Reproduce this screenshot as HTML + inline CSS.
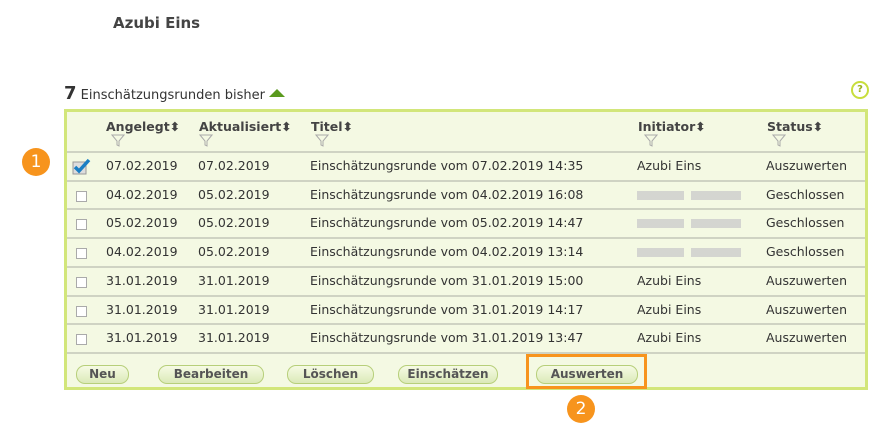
<!DOCTYPE html>
<html><head><meta charset="utf-8"><style>
body{margin:0;width:895px;height:431px;background:#fff;font-family:"DejaVu Sans","Liberation Sans",sans-serif;color:#333;position:relative;overflow:hidden}
.a{position:absolute}
h1{position:absolute;left:113px;top:14px;margin:0;font-size:15px;font-weight:bold;color:#444}
.tbl{position:absolute;left:64px;top:109px;width:798px;height:275px;border:3px solid #d2e67a;background:#f4f9e3}
.row{position:absolute;left:0;width:798px;border-top:2px solid #cfd3c3;font-size:12.5px;color:#333}
.row span{position:absolute;top:5px;white-space:nowrap}
.hd span{position:absolute;top:7px;font-weight:bold;font-size:12.5px;color:#444}
.cb{position:absolute;left:9px;top:9px;width:9px;height:9px;border:1px solid #aaa;background:#fff}
.blur{position:absolute;top:9px;height:9px;width:104px;background:linear-gradient(90deg,#ccc 0 45%,transparent 45% 52%,#ccc 52%);opacity:.8}
.btn{position:absolute;top:253px;height:17px;border:1px solid #b7cf7a;border-radius:9px;background:linear-gradient(#f6fbe4,#dbe9b8);font-size:12px;font-weight:bold;color:#555;text-align:center;line-height:17px}
.num{position:absolute;width:28px;height:28px;border-radius:50%;background:#f7941d;color:#fff;font-size:17px;text-align:center;line-height:28px}
.srt{color:#d4d4d4;font-size:9px;font-weight:normal}
</style></head><body>
<h1>Azubi Eins</h1>
<div class="a" style="left:64px;top:83px;font-size:13px;color:#333"><b style="font-size:18px">7</b> Einschätzungsrunden bisher <svg width="16" height="10" style="vertical-align:1px"><path d="M0 9 L8 1 L16 9Z" fill="#5a9a1e"/></svg></div>
<div class="a" style="left:851px;top:81px;width:14px;height:14px;border:2px solid #c8de3c;border-radius:50%;font-size:10px;font-weight:bold;color:#9bb01c;text-align:center;line-height:14px">?</div>
<div class="tbl">
<div class="hd">
<span style="left:39px">Angelegt<span class="srt" style="position:static">⬍</span></span>
<span style="left:132px">Aktualisiert<span class="srt" style="position:static">⬍</span></span>
<span style="left:244px">Titel<span class="srt" style="position:static">⬍</span></span>
<span style="left:571px">Initiator<span class="srt" style="position:static">⬍</span></span>
<span style="left:700px">Status<span class="srt" style="position:static">⬍</span></span>
<svg class="a" style="left:44px;top:22px" width="14" height="13"><path d="M1 1H13L8 7V12L6 11V7Z" fill="none" stroke="#aaa"/></svg>
<svg class="a" style="left:132px;top:22px" width="14" height="13"><path d="M1 1H13L8 7V12L6 11V7Z" fill="none" stroke="#aaa"/></svg>
<svg class="a" style="left:248px;top:22px" width="14" height="13"><path d="M1 1H13L8 7V12L6 11V7Z" fill="none" stroke="#aaa"/></svg>
<svg class="a" style="left:577px;top:22px" width="14" height="13"><path d="M1 1H13L8 7V12L6 11V7Z" fill="none" stroke="#aaa"/></svg>
<svg class="a" style="left:705px;top:22px" width="14" height="13"><path d="M1 1H13L8 7V12L6 11V7Z" fill="none" stroke="#aaa"/></svg>
</div>
<div class="row" style="top:39px;height:27px"><svg class="a" style="left:5px;top:5px" width="20" height="17"><rect x="1" y="4" width="13" height="12" fill="#ddd" stroke="#999"/><path d="M3 9L7 13L17 2" stroke="#1a7fc4" stroke-width="3.5" fill="none"/></svg><span style="left:39px">07.02.2019</span><span style="left:131px">07.02.2019</span><span style="left:243px">Einschätzungsrunde vom 07.02.2019 14:35</span><span style="left:570px">Azubi Eins</span><span style="left:699px">Auszuwerten</span></div>
<div class="row" style="top:68px;height:27px"><div class="cb"></div><span style="left:39px">04.02.2019</span><span style="left:131px">05.02.2019</span><span style="left:243px">Einschätzungsrunde vom 04.02.2019 16:08</span><div class="blur" style="left:570px"></div><span style="left:699px">Geschlossen</span></div>
<div class="row" style="top:96px;height:27px"><div class="cb"></div><span style="left:39px">05.02.2019</span><span style="left:131px">05.02.2019</span><span style="left:243px">Einschätzungsrunde vom 05.02.2019 14:47</span><div class="blur" style="left:570px"></div><span style="left:699px">Geschlossen</span></div>
<div class="row" style="top:125px;height:27px"><div class="cb"></div><span style="left:39px">04.02.2019</span><span style="left:131px">05.02.2019</span><span style="left:243px">Einschätzungsrunde vom 04.02.2019 13:14</span><div class="blur" style="left:570px"></div><span style="left:699px">Geschlossen</span></div>
<div class="row" style="top:154px;height:27px"><div class="cb"></div><span style="left:39px">31.01.2019</span><span style="left:131px">31.01.2019</span><span style="left:243px">Einschätzungsrunde vom 31.01.2019 15:00</span><span style="left:570px">Azubi Eins</span><span style="left:699px">Auszuwerten</span></div>
<div class="row" style="top:183px;height:27px"><div class="cb"></div><span style="left:39px">31.01.2019</span><span style="left:131px">31.01.2019</span><span style="left:243px">Einschätzungsrunde vom 31.01.2019 14:17</span><span style="left:570px">Azubi Eins</span><span style="left:699px">Auszuwerten</span></div>
<div class="row" style="top:211px;height:27px"><div class="cb"></div><span style="left:39px">31.01.2019</span><span style="left:131px">31.01.2019</span><span style="left:243px">Einschätzungsrunde vom 31.01.2019 13:47</span><span style="left:570px">Azubi Eins</span><span style="left:699px">Auszuwerten</span></div>
<div class="row" style="top:240px;height:0"></div>
<div class="btn" style="left:9px;width:51px">Neu</div>
<div class="btn" style="left:91px;width:104px">Bearbeiten</div>
<div class="btn" style="left:220px;width:85px">Löschen</div>
<div class="btn" style="left:331px;width:98px">Einschätzen</div>
<div class="btn" style="left:469px;width:100px">Auswerten</div>
</div>
<div class="a" style="left:526px;top:354px;width:115px;height:29px;border:3px solid #f7941d"></div>
<div class="num" style="left:22px;top:148px">1</div>
<div class="num" style="left:567px;top:395px">2</div>
</body></html>
